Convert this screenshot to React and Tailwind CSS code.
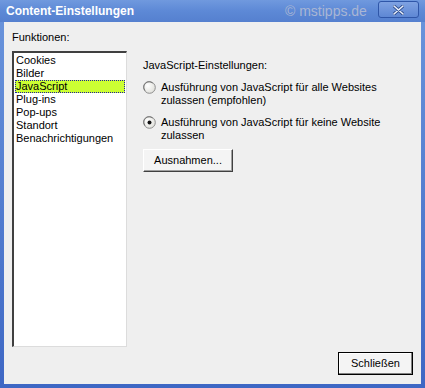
import React from "react";

const font = { fontFamily: '"Liberation Sans", Arial, sans-serif' };

function Radio({ checked }) {
  return (
    <svg width="13" height="13" viewBox="0 0 13 13" className="shrink-0">
      <defs>
        <radialGradient id={checked ? "rg1" : "rg2"} cx="0.35" cy="0.35" r="0.8">
          <stop offset="0" stopColor="#ffffff" />
          <stop offset="1" stopColor="#dcdcd6" />
        </radialGradient>
      </defs>
      <circle cx="6.5" cy="6.5" r="5.8" fill={`url(#${checked ? "rg1" : "rg2"})`} stroke="#8e8e8e" strokeWidth="1" />
      <path d="M2.2 9.5 A5 5 0 0 1 9.5 2.2" fill="none" stroke="#6a6a6a" strokeWidth="0.8" />
      {checked && <circle cx="6.5" cy="6.5" r="2" fill="#111" />}
    </svg>
  );
}

export default function App() {
  const items = ["Cookies", "Bilder", "JavaScript", "Plug-ins", "Pop-ups", "Standort", "Benachrichtigungen"];
  return (
    <div
      className="w-[425px] h-[388px] flex flex-col bg-gradient-to-b from-[#6b95dc] to-[#3e67c4] text-[11px] text-black overflow-hidden"
      style={font}
    >
      {/* Title bar */}
      <div className="h-[22px] shrink-0 flex items-center bg-gradient-to-b from-[#7099de] via-[#5d89d6] to-[#5580cf] relative">
        <span className="ml-[6px] text-white font-bold text-[12px] leading-none">
          Content-Einstellungen
        </span>
        <span className="absolute left-[285px] top-[4px] text-[14px] leading-none text-[#a9b6d4]">
          © mstipps.de
        </span>
        <div className="absolute left-[378px] top-[1px] w-[41px] h-[17px] rounded-[3px] border border-[#2f56a8] bg-gradient-to-b from-[#7fa2e2] to-[#5e87d4] flex items-center justify-center">
          <svg width="11" height="10" viewBox="0 0 11 10">
            <path d="M1 1 L10 9 M10 1 L1 9" stroke="#2b4a8a" strokeWidth="3.2" strokeLinecap="round" />
            <path d="M1 1 L10 9 M10 1 L1 9" stroke="#e8eefa" strokeWidth="1.6" strokeLinecap="round" />
          </svg>
        </div>
      </div>

      {/* Body */}
      <div className="flex-1 mx-[4px] mb-[4px] bg-[#efefef] flex flex-col pl-[8px] pr-[8px] pt-[9px] pb-[9px]">
        <div className="leading-[13px]">Funktionen:</div>
        <div className="flex mt-[7px]">
          <div className="w-[115px] h-[296px] bg-white border-t-2 border-l-2 border-t-[#404040] border-l-[#404040] border-r border-b border-r-[#dcdcdc] border-b-[#dcdcdc] pt-[1px] pl-[1px]">
            {items.map((it) => (
              <div
                key={it}
                className={
                  "h-[13px] leading-[12px] pl-[1px] " +
                  (it === "JavaScript" ? "bg-[#ccff33] outline outline-1 outline-dotted outline-[#2020a0] -outline-offset-1 mr-[1px]" : "")
                }
              >
                {it}
              </div>
            ))}
          </div>
          <div className="ml-[16px] pt-[8px] flex flex-col">
            <div className="leading-[13px]">JavaScript-Einstellungen:</div>
            <div className="flex mt-[9px] gap-[5px]">
              <Radio />
              <div className="leading-[13px]">
                Ausführung von JavaScript für alle Websites
                <br />
                zulassen (empfohlen)
              </div>
            </div>
            <div className="flex mt-[9px] gap-[5px]">
              <Radio checked />
              <div className="leading-[13px]">
                Ausführung von JavaScript für keine Website
                <br />
                zulassen
              </div>
            </div>
            <div className="mt-[7px] w-[90px] h-[23px] bg-[#f4f4f4] border border-t-white border-l-white border-r-[#404040] border-b-[#404040] shadow-[inset_-1px_-1px_0_#a0a0a0] flex items-center justify-center">
              Ausnahmen...
            </div>
          </div>
        </div>
        <div className="flex justify-end mt-auto">
          <div className="w-[75px] h-[23px] bg-[#f4f4f4] border border-black shadow-[inset_-1px_-1px_0_#808080,inset_1px_1px_0_#ffffff] flex items-center justify-center">
            Schließen
          </div>
        </div>
      </div>
    </div>
  );
}
